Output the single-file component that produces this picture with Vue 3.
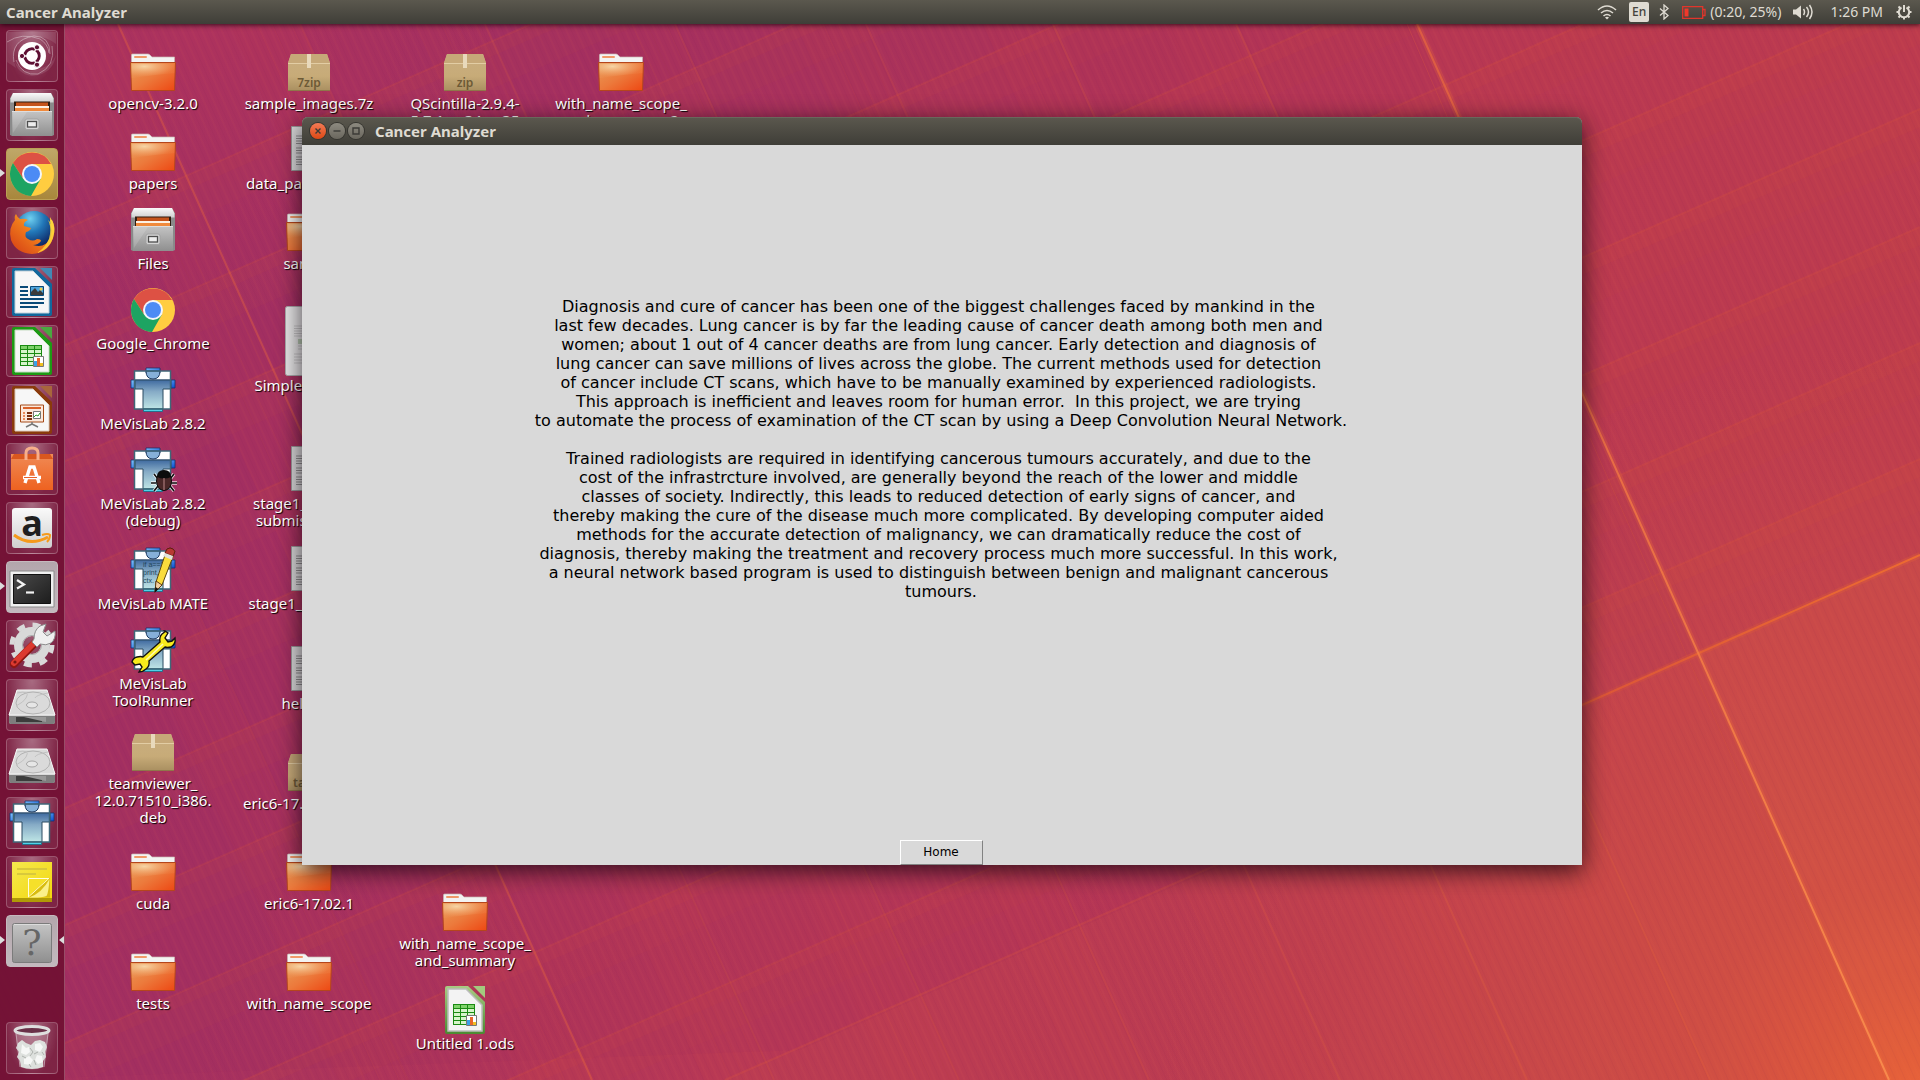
<script setup>
const launcher = [
  { icon: 'dash', label: 'Search your computer' },
  { icon: 'files', label: 'Files', drop: 2 },
  { icon: 'chrome', label: 'Google Chrome', drop: 2, tone: 'gold', running: true },
  { icon: 'firefox', label: 'Firefox' },
  { icon: 'writer', label: 'LibreOffice Writer', drop: 2 },
  { icon: 'calc', label: 'LibreOffice Calc', drop: 2 },
  { icon: 'impress', label: 'LibreOffice Impress', drop: 2 },
  { icon: 'software', label: 'Ubuntu Software' },
  { icon: 'amazon', label: 'Amazon', letter: 'a' },
  { icon: 'terminal', label: 'Terminal', tone: 'silver', running: true },
  { icon: 'settings', label: 'System Settings' },
  { icon: 'drive', label: 'Volume 1' },
  { icon: 'drive', label: 'Volume 2' },
  { icon: 'mevis', label: 'MeVisLab', drop: 2 },
  { icon: 'notes', label: 'Sticky Notes' },
  { icon: 'unknown', label: 'Cancer Analyzer', letter: '?', tone: 'silver', running: true, focused: true },
]

const shortcuts = [
  { x: 153, y: 48, icon: 'folder', lines: ['opencv-3.2.0'] },
  { x: 153, y: 128, icon: 'folder', lines: ['papers'] },
  { x: 153, y: 208, icon: 'files', lines: ['Files'] },
  { x: 153, y: 288, icon: 'chrome', lines: ['Google_Chrome'] },
  { x: 153, y: 368, icon: 'mevis', lines: ['MeVisLab 2.8.2'] },
  { x: 153, y: 448, icon: 'mevis', badge: 'bug', lines: ['MeVisLab 2.8.2', '(debug)'] },
  { x: 153, y: 548, icon: 'mevis', badge: 'pencil', code: ['if a==1', 'print,', 'ctx.'], lines: ['MeVisLab MATE'] },
  { x: 153, y: 628, icon: 'mevis', badge: 'wrench', lines: ['MeVisLab', 'ToolRunner'] },
  { x: 153, y: 728, icon: 'package', lines: ['teamviewer_', '12.0.71510_i386.', 'deb'] },
  { x: 153, y: 848, icon: 'folder', lines: ['cuda'] },
  { x: 153, y: 948, icon: 'folder', lines: ['tests'] },
  { x: 309, y: 48, icon: 'package', tag: '7zip', lines: ['sample_images.7z'] },
  { x: 309, y: 128, icon: 'textfile', lines: ['data_passing.json'] },
  { x: 309, y: 208, icon: 'folder', lines: ['sample'] },
  { x: 309, y: 306, icon: 'preview', tall: true, lines: ['SimpleITK-1.0.0'] },
  { x: 309, y: 448, icon: 'textfile', lines: ['stage1_sample_', 'submission.csv'] },
  { x: 309, y: 548, icon: 'textfile', lines: ['stage1_labels.csv'] },
  { x: 309, y: 648, icon: 'textfile', lines: ['hello.py'] },
  { x: 309, y: 748, icon: 'package', tag: 'tar.gz', lines: ['eric6-17.02.1.tar.gz'] },
  { x: 309, y: 848, icon: 'folder', lines: ['eric6-17.02.1'] },
  { x: 309, y: 948, icon: 'folder', lines: ['with_name_scope'] },
  { x: 465, y: 48, icon: 'package', tag: 'zip', lines: ['QScintilla-2.9.4-', '5.7.1.cp34.cp35'] },
  { x: 465, y: 888, icon: 'folder', lines: ['with_name_scope_', 'and_summary'] },
  { x: 465, y: 988, icon: 'ods', lines: ['Untitled 1.ods'] },
  { x: 621, y: 48, icon: 'folder', lines: ['with_name_scope_', 'and_summary_2'] },
]

const steep = [
  [-66, 0.08], [118, 0.4], [300, 0.14], [485, 0.14], [675, 0.16], [866, 0.16], [1053, 0.2], [1236, 0.24],
]
const shallow = [229, 345, 461, 577, 692, 808, 925, 1043, 1159, 1275]

const paragraphs = [
  [
    'Diagnosis and cure of cancer has been one of the biggest challenges faced by mankind in the',
    'last few decades. Lung cancer is by far the leading cause of cancer death among both men and',
    'women; about 1 out of 4 cancer deaths are from lung cancer. Early detection and diagnosis of',
    'lung cancer can save millions of lives across the globe. The current methods used for detection',
    'of cancer include CT scans, which have to be manually examined by experienced radiologists.',
    'This approach is inefficient and leaves room for human error.  In this project, we are trying',
    'to automate the process of examination of the CT scan by using a Deep Convolution Neural Network.',
  ],
  [
    'Trained radiologists are required in identifying cancerous tumours accurately, and due to the',
    'cost of the infrastrcture involved, are generally beyond the reach of the lower and middle',
    'classes of society. Indirectly, this leads to reduced detection of early signs of cancer, and',
    'thereby making the cure of the disease much more complicated. By developing computer aided',
    'methods for the accurate detection of malignancy, we can dramatically reduce the cost of',
    'diagnosis, thereby making the treatment and recovery process much more successful. In this work,',
    'a neural network based program is used to distinguish between benign and malignant cancerous',
    'tumours.',
  ],
].map((lines) => lines.join(' \n'))
</script>

<template>
  <div class="screen">
    <svg class="wallpaper" viewBox="0 0 1920 1080" preserveAspectRatio="xMidYMid slice" aria-hidden="true">
      <defs>
        <linearGradient id="wpBase" x1="0" y1="0.1" x2="1" y2="0.3">
          <stop offset="0" stop-color="#a12f64" />
          <stop offset="0.3" stop-color="#a6305f" />
          <stop offset="0.65" stop-color="#b63654" />
          <stop offset="1" stop-color="#bd3b4e" />
        </linearGradient>
        <radialGradient id="wpTop" gradientUnits="userSpaceOnUse" cx="200" cy="20" r="300">
          <stop offset="0" stop-color="#b9365a" stop-opacity="0.65" />
          <stop offset="1" stop-color="#b9365a" stop-opacity="0" />
        </radialGradient>
        <radialGradient id="wpLow" gradientUnits="userSpaceOnUse" cx="800" cy="1180" r="620">
          <stop offset="0" stop-color="#be3c52" stop-opacity="0.6" />
          <stop offset="1" stop-color="#b83858" stop-opacity="0" />
        </radialGradient>
        <radialGradient id="wpGlow" gradientUnits="userSpaceOnUse" cx="1920" cy="1100" r="760">
          <stop offset="0" stop-color="#ea6236" stop-opacity="0.95" />
          <stop offset="0.3" stop-color="#d65440" stop-opacity="0.65" />
          <stop offset="0.7" stop-color="#cc4c48" stop-opacity="0.4" />
          <stop offset="1" stop-color="#c84848" stop-opacity="0" />
        </radialGradient>
        <linearGradient id="wpHot" gradientUnits="userSpaceOnUse" x1="1582" y1="0" x2="1920" y2="0">
          <stop offset="0" stop-color="#e8602e" stop-opacity="0.6" />
          <stop offset="1" stop-color="#f2702e" stop-opacity="0.85" />
        </linearGradient>
        <linearGradient id="wpRay" gradientUnits="userSpaceOnUse" x1="0" y1="24" x2="0" y2="1080">
          <stop offset="0" stop-color="#ee6c3c" stop-opacity="0.6" />
          <stop offset="1" stop-color="#f88a4c" />
        </linearGradient>
        <pattern id="wpGrain" width="9" height="9" patternUnits="userSpaceOnUse" patternTransform="rotate(-24)">
          <rect width="2" height="9" fill="#f07a4a" opacity="0.04" />
          <rect x="5" width="1" height="9" fill="#6a1850" opacity="0.05" />
        </pattern>
      </defs>
      <rect width="1920" height="1080" fill="url(#wpBase)" />
      <rect width="1920" height="1080" fill="url(#wpTop)" />
      <rect width="1920" height="1080" fill="url(#wpLow)" />
      <rect width="1920" height="1080" fill="url(#wpGlow)" />
      <g v-for="y in shallow" :key="y" :transform="`translate(65 ${y})`">
        <path d="M0 0 1855-816v52L0 46z" fill="#e8603a" opacity="0.04" />
        <path d="M0 0 1855-816v18L0 14z" fill="#e8603a" opacity="0.06" />
        <path d="M0 0 1855-816" stroke="#e8603a" stroke-width="2" opacity="0.16" />
      </g>
      <g v-for="[x, o] in steep" :key="x" :transform="`translate(${x} 24)`">
        <path d="M0 0 474 1056h-70L-70 0z" fill="#d84a48" opacity="0.07" />
        <path d="M0 0 474 1056" stroke="#ee6a3c" stroke-width="2" :opacity="o" />
        <path d="M-9 0 465 1056M-28 0 446 1056M-43 0 431 1056" stroke="#e8603a" opacity="0.08" />
      </g>
      <path d="M1417 24 1697 650 1582 705 1280 840 800 1050 0 1080V0h1417z" fill="#8d2a68" opacity="0.06" />
      <path d="M1697 652 1920 555v525h-30z" fill="#ee7a40" opacity="0.12" />
      <path d="M1697 652 1887 1080H725L1582 705z" fill="#ee7a40" opacity="0.05" />
      <rect width="1920" height="1080" fill="url(#wpGrain)" />
      <path d="M725 1080 1582 705" stroke="#e8603a" stroke-width="2" opacity="0.2" />
      <path d="M1582 705 1920 555" stroke="url(#wpHot)" stroke-width="6" opacity="0.25" />
      <path d="M1582 705 1920 555" stroke="url(#wpHot)" stroke-width="2" />
      <path d="M1417 24 1889 1080" stroke="#f0703a" stroke-width="6" opacity="0.22" />
      <path d="M1417 24 1889 1080" stroke="url(#wpRay)" stroke-width="2" />
      <path d="M1407 24 1452 128M1590 438 1680 640 1860 1046" fill="none" stroke="#e8603a" opacity="0.25" />
    </svg>

    <svg class="sprites" aria-hidden="true">
      <defs>
        <linearGradient id="gFolder" x1="0" y1="0" x2="1" y2="1">
          <stop offset="0" stop-color="#e99b57" /><stop offset="0.5" stop-color="#ec7a3c" /><stop offset="1" stop-color="#ee4712" />
        </linearGradient>
        <radialGradient id="gShine" cx="0.3" cy="0.2" r="0.7">
          <stop offset="0" stop-color="#f8dcae" stop-opacity="0.9" /><stop offset="1" stop-color="#f3b57c" stop-opacity="0.1" />
        </radialGradient>
        <linearGradient id="gPack" x1="0" y1="0" x2="0" y2="1">
          <stop offset="0" stop-color="#c9ae80" /><stop offset="0.6" stop-color="#c7ab78" /><stop offset="1" stop-color="#a98f60" />
        </linearGradient>
        <linearGradient id="gGrey" x1="0" y1="0" x2="0" y2="1">
          <stop offset="0" stop-color="#c4c4c4" /><stop offset="1" stop-color="#8f8f8f" />
        </linearGradient>
        <linearGradient id="gLight" x1="0" y1="0" x2="0" y2="1">
          <stop offset="0" stop-color="#fafafa" /><stop offset="1" stop-color="#cfcfcf" />
        </linearGradient>
        <linearGradient id="gShirt" x1="0" y1="0" x2="0" y2="1">
          <stop offset="0" stop-color="#3f6aa0" /><stop offset="0.4" stop-color="#86abc6" /><stop offset="1" stop-color="#bfe6e6" />
        </linearGradient>
        <linearGradient id="gBlue" x1="0" y1="0" x2="1" y2="1">
          <stop offset="0" stop-color="#7fc4ff" /><stop offset="1" stop-color="#0b4fd0" />
        </linearGradient>
        <linearGradient id="gDark" x1="0" y1="0" x2="1" y2="1">
          <stop offset="0" stop-color="#4a4a4a" /><stop offset="1" stop-color="#1d1d1d" />
        </linearGradient>
        <linearGradient id="gOds" x1="0" y1="0" x2="0" y2="1">
          <stop offset="0" stop-color="#aacb84" /><stop offset="1" stop-color="#4b8a32" />
        </linearGradient>
        <radialGradient id="gGlobe" cx="0.4" cy="0.2" r="0.8">
          <stop offset="0" stop-color="#6fd0f0" /><stop offset="0.45" stop-color="#2277b8" /><stop offset="1" stop-color="#0b1f5c" />
        </radialGradient>
        <linearGradient id="gFox" x1="0" y1="1" x2="1" y2="0">
          <stop offset="0" stop-color="#d33a14" /><stop offset="0.5" stop-color="#ef7a1c" /><stop offset="1" stop-color="#ffe14a" />
        </linearGradient>
        <linearGradient id="gBag" x1="0" y1="0" x2="0" y2="1">
          <stop offset="0" stop-color="#f08a55" /><stop offset="1" stop-color="#ee6220" />
        </linearGradient>
        <linearGradient id="gNote" x1="0" y1="0" x2="1" y2="1">
          <stop offset="0" stop-color="#f5e84e" /><stop offset="1" stop-color="#f3d90e" />
        </linearGradient>
      </defs>

      <symbol id="i-folder" viewBox="0 0 48 48">
        <path d="M2.500 16V7q0-1 1-1H19q1 0 2 1l2 2h22.500v8z" fill="#f4f4f2" stroke="#c9b9b4" stroke-width=".7" />
        <rect x="5" y="8" width="13" height="2" rx="1" fill="#f09a68" />
        <path d="M1.500 14.500h45L45.500 42.500h-43z" fill="url(#gFolder)" stroke="#b5461c" />
        <path d="M2.500 15.500h43V25Q24 27 2.500 30z" fill="url(#gShine)" />
      </symbol>

      <symbol id="i-package" viewBox="0 0 48 48">
        <path d="M6 6h36l3 9v28H3V15z" fill="url(#gPack)" />
        <path d="M6 6h36l3 9H3z" fill="#c6a878" />
        <path d="M3 15.500h42" stroke="#e2cda4" />
        <path d="M22 6h4v14h-4z" fill="#e8d9bb" />
        <path d="M3 42.500h42" stroke="#8f774a" />
      </symbol>

      <symbol id="i-files" viewBox="0 0 48 48">
        <path d="M5 0h38l3 5v37l-2 1H4l-2-1V5z" fill="#8a8a8a" />
        <path d="M5 0h38l2.500 5.500v4h-43v-4z" fill="url(#gLight)" />
        <path d="M6 8.500h36V20H6z" fill="#2e1c10" />
        <path d="M8 9.500h32V17H8z" fill="#c4531b" />
        <path d="M7 13h34v2H7z" fill="#fdf1e4" />
        <path d="M7 15h34v4H7z" fill="#f08a3c" />
        <path d="M4 18h40v25H4z" fill="url(#gGrey)" />
        <path d="M4 18.500h40" stroke="#dedede" />
        <path d="M5 19h14L5 40z" fill="#fff" opacity=".14" />
        <rect x="17" y="26" width="14" height="10.500" rx="2" fill="#d5d5d5" stroke="#a2a2a2" />
        <rect x="19.500" y="28.500" width="9" height="5.500" fill="#ededed" stroke="#4e4e4e" stroke-width="1.300" />
      </symbol>

      <symbol id="i-chrome" viewBox="0 0 48 48">
        <circle cx="24" cy="22" r="22" fill="#ffcd40" />
        <path d="M4.950 11A22 22 0 0 1 43.050 12H24L15.340 27z" fill="#dd5144" />
        <path d="M4.950 11A22 22 0 0 0 23 44L32.660 27 24 30l-8.660-3z" fill="#1da462" />
        <circle cx="24" cy="22" r="10" fill="#f4f6fa" />
        <circle cx="24" cy="22" r="8" fill="#4c8bf5" />
      </symbol>

      <symbol id="i-mevis" viewBox="0 0 48 48">
        <path d="M5.500 3h36v38h-36z" fill="#fff" />
        <path d="M17 0h14v5H17z" fill="url(#gBlue)" stroke="#1c2f66" stroke-width=".8" />
        <path d="M2 12h44v8H2z" fill="url(#gBlue)" stroke="#12306e" stroke-width=".8" />
        <path d="M6 12h36v9h-8v20H14V21H6z" fill="url(#gShirt)" stroke="#2b4a60" />
        <path d="M17 3h14q0 8-7 8t-7-8z" fill="#86b0d8" stroke="#1f3c62" />
        <path d="M14.500 41h19v2.500h-19z" fill="#4fd3e8" stroke="#136a86" stroke-width=".8" />
        <path d="M5.500 3h36v38h-36z" fill="none" stroke="#3f6778" stroke-width="1.500" />
      </symbol>

      <symbol id="i-bug" viewBox="0 0 48 48">
        <g stroke="#fff" stroke-width="3.400" fill="none" opacity=".8"><path d="M29 31l-4-5M27 35h-5M29 38l-4 5M41 31l4-5M42 35h6M41 38l4 5" /></g>
        <g stroke="#111" stroke-width="1.600" fill="none"><path d="M29 31l-4-5M27 35h-5M29 38l-4 5M41 31l4-5M42 35h6M41 38l4 5" /></g>
        <ellipse cx="35" cy="33" rx="7.500" ry="9.500" fill="#4a2828" stroke="#0a0a0a" />
        <path d="M28 29q0-7 7-7t7 7q-7 3-14 0z" fill="#0c0c0c" />
        <path d="M35 30v12" stroke="#b88" />
      </symbol>

      <symbol id="i-pencil" viewBox="0 0 48 48">
        <path d="M38 1q3-2 6 0 3 2 1 5L33 37l-7 7 1-10z" fill="#f9dc3c" stroke="#5d4a10" />
        <path d="M38 1q3-2 6 0 3 2 1 5l-1 2-8-3z" fill="#b83a32" stroke="#641a14" />
        <path d="M36 5l8 3-1 4-9-4z" fill="#e2e2dc" />
        <path d="M27 33l6 4-7 7z" fill="#f2cfa0" stroke="#5d3a10" /><path d="M26.500 39l3 2-4 4z" fill="#111" />
      </symbol>

      <symbol id="i-wrench" viewBox="0 0 48 48">
        <path d="M33 6q4-3 3-3l3 2-3 5 3 4 4-1 3-3q1 6-4 9-4 1-6 0L20 33q1 5-3 8-3 3-7 3l3-5-2-3-5 1-3-3q1-4 5-5 4-1 6 0L31 14q-1-5 2-8z" fill="#f7ea1c" stroke="#111" stroke-width="1.400" />
        <path d="M17 32 34 16" stroke="#fffbb0" stroke-width="1.500" />
      </symbol>

      <symbol id="i-textfile" viewBox="0 0 48 48">
        <path d="M6.500-1.500h35v44h-35z" fill="#dcdcdc" stroke="#999" />
        <path d="M11 8h26M11 10.500h26M11 13h26M11 15.500h24M11 20h26M11 22.500h26M11 25h20M11 29h26M11 31.500h26M11 34h26M11 36.500h16" stroke="#8f8f8f" />
      </symbol>

      <symbol id="i-preview" viewBox="0 0 48 72">
        <rect x=".5" y=".5" width="47" height="69" rx="2" fill="#e6e6e6" stroke="#aaa" />
        <path d="M9 20h30M9 22.500h30M9 25h28M9 27.500h30M9 30h30M13 40h24M13 43h24M9 48h30M9 51h30M9 54h30M9 57h20" stroke="#c4c4c4" />
        <path d="M13 33h20v5H13z" fill="#b6c9b0" />
      </symbol>

      <symbol id="i-sheet" viewBox="0 0 22 21">
        <path d="M0 0h22v21H0z" fill="#1a8a12" />
        <path d="M1 1h6v3H1zM8 1h6v3H8zM15 1h6v3h-6z" fill="#7fd26b" />
        <path d="M1 5h6v3H1zM8 5h6v3H8zM15 5h6v3h-6zM1 9h6v3H1zM8 9h6v3H8zM15 9h6v3h-6zM1 13h6v3H1zM8 13h6v3H8zM15 13h6v3h-6zM1 17h6v3H1zM8 17h6v3H8z" fill="#d6f5ca" />
      </symbol>

      <symbol id="i-ods" viewBox="0 0 48 48">
        <path d="M6-2h21l17 16v30q0 2-2 2H6q-2 0-2-2V0q0-2 2-2z" fill="url(#gOds)" />
        <path d="M32-2h12v12z" fill="#a3c97e" />
        <path d="M7 1h18l16 16v26H7z" fill="#f3f3f3" />
        <path d="M7 1h18l16 16v26H7z" fill="none" stroke="#bcbcbc" stroke-width="1.500" />
        <use href="#i-sheet" x="12" y="16" width="22" height="21" />
        <path d="M25.500 27.500h10v10h-10z" fill="#fff" stroke="#777" />
        <path d="M26 32h3v5h-3z" fill="#3aa0e8" /><path d="M29 29h3v8h-3z" fill="#e8662a" /><path d="M32 34h3v3h-3z" fill="#f0c020" />
      </symbol>

      <symbol id="i-calc" viewBox="0 0 48 48">
        <path d="M6-2h21l17 16v30q0 2-2 2H6q-2 0-2-2V0q0-2 2-2z" fill="#1d9a14" />
        <path d="M32-2h12v12z" fill="#4aa840" />
        <path d="M7 1h18l16 16v26H7z" fill="#f7f7f7" stroke="#c6dcc2" />
        <use href="#i-sheet" x="12" y="16" width="22" height="21" />
        <path d="M25.500 27.500h10v10h-10z" fill="#fff" stroke="#777" />
        <path d="M26 32h3v5h-3z" fill="#3aa0e8" /><path d="M29 29h3v8h-3z" fill="#e8662a" /><path d="M32 34h3v3h-3z" fill="#f0c020" />
      </symbol>

      <symbol id="i-writer" viewBox="0 0 48 48">
        <path d="M6-2h21l17 16v30q0 2-2 2H6q-2 0-2-2V0q0-2 2-2z" fill="#11689c" />
        <path d="M32-2h12v12z" fill="#4389b4" />
        <path d="M7 1h18l16 16v26H7z" fill="#f7f7f7" stroke="#c0d0da" />
        <path d="M12 17h8M12 21h8M12 25h8M12 29h24M12 33h24M12 37h18" stroke="#0a4a78" stroke-width="2" />
        <path d="M22.500 16.500h13v9h-13z" fill="#4ea5dc" stroke="#0a4a78" />
        <path d="M23 25v-3l4-4 3 4 2-2 3 3v2z" fill="#3b3b3b" /><circle cx="33" cy="19" r="1.500" fill="#f5d24a" />
      </symbol>

      <symbol id="i-impress" viewBox="0 0 48 48">
        <path d="M6-2h21l17 16v30q0 2-2 2H6q-2 0-2-2V0q0-2 2-2z" fill="#8a3a0c" />
        <path d="M32-2h12v12z" fill="#a8663c" />
        <path d="M7 1h18l16 16v26H7z" fill="#f7f7f7" stroke="#dccabb" />
        <path d="M12.500 17h23v17h-23z" fill="#fbe9dd" stroke="#a54a18" />
        <path d="M15 20h18" stroke="#d9622a" stroke-width="2" />
        <path d="M15 25h2M15 28h2M15 31h2" stroke="#e88a5a" stroke-width="2" /><path d="M19 25h5M19 28h5M19 31h5" stroke="#7a3010" stroke-width="2" />
        <path d="M25.500 23.500h7v7h-7z" fill="#fff" stroke="#777" /><path d="M26 29l2-2 2 1 2-3" stroke="#2a9a2a" fill="none" />
        <path d="M24 34v3M24 36l-6 3M24 36l6 3" stroke="#777" stroke-width="1.500" fill="none" />
      </symbol>

      <symbol id="i-dash" viewBox="0 0 48 48">
        <g fill="none" stroke="#fff" stroke-width="1" opacity=".35">
          <path d="M6 30Q2 8 26 4q16 0 16 18" /><path d="M44 14q4 20-14 28-16 2-22-14" /><path d="M-1 10Q14 0 32 7q8 5 9 14" />
        </g>
        <path d="M0 0h48v12Q30-2 12 10 2 20 8 36L-1 30V0z" fill="#fff" opacity=".1" /><path d="M48 22q-2 20-24 22-14-2-17-14 8 12 20 8 18-4 21-16z" fill="#fff" opacity=".1" />
        <circle cx="24" cy="24" r="14" fill="#fff" />
        <circle cx="24" cy="24" r="7.200" fill="none" stroke="#5d0f33" stroke-width="3" />
        <path d="M24 24h-10M24 24l5-9M24 24l5 9" stroke="#fff" stroke-width="1.300" />
        <circle cx="24" cy="24" r="5.500" fill="#fff" />
        <g fill="#5d0f33" stroke="#fff"><circle cx="14" cy="24" r="2.600" /><circle cx="29" cy="15.300" r="2.600" /><circle cx="29" cy="32.700" r="2.600" /></g>
      </symbol>

      <symbol id="i-firefox" viewBox="0 0 48 48">
        <circle cx="26" cy="21" r="19" fill="url(#gGlobe)" />
        <path d="M44 11q4 8 1 18-5 15-21 16Q8 44 3 31 0 19 7 11q-1-4 1-6 1 3 4 5 5-1 8 1-5 2-4 6l7 2q-1 3-5 4-2 5 2 7 5 3 9 0 4 0 4 2-3 4-8 4 12 4 17-7 3-9-1-16l1 3q2-1 0-5z" fill="url(#gFox)" />
        <path d="M42 8q7 9 3 21-4 12-16 15 12-8 13-19 1-9-2-14l2 2z" fill="#ffd83a" opacity=".8" />
      </symbol>

      <symbol id="i-software" viewBox="0 0 48 48">
        <path d="M3 9h42v36H3z" fill="url(#gBag)" />
        <path d="M3 14l3-5h36l3 5z" fill="#d9571f" />
        <path d="M18 15V8q0-5 6-5t6 5v7" fill="none" stroke="#f7ae8a" stroke-width="3" />
        <path d="M17 38l5-16h4l5 16" fill="none" stroke="#fff" stroke-width="3.400" /><path d="M15 32.500h18" stroke="#fff" stroke-width="3.500" /><path d="M16 32.500h13" stroke="#e8622a" stroke-width="1" />
      </symbol>

      <symbol id="i-amazon" viewBox="0 0 48 48">
        <rect x="4" y="4" width="40" height="40" rx="3" fill="url(#gLight)" />
        <path d="M6 31q16 12 34 2" fill="none" stroke="#f59a1c" stroke-width="3" /><path d="M34 31q6-2 8 0 0 4-3 7" fill="none" stroke="#f59a1c" stroke-width="2" />
      </symbol>

      <symbol id="i-terminal" viewBox="0 0 48 48">
        <path d="M2 8h44v36H2z" fill="#f0f0f0" stroke="#8a8a8a" />
        <path d="M5.500 11.500h37v29h-37z" fill="url(#gDark)" stroke="#111" />
        <path d="M9 17l7 4.500-7 4" fill="none" stroke="#f2f2f2" stroke-width="2.200" /><path d="M18 29.500h8" stroke="#f2f2f2" stroke-width="2.200" />
      </symbol>

      <symbol id="i-settings" viewBox="0 0 48 48">
        <circle cx="24" cy="23" r="13.500" fill="none" stroke="#d9d9d9" stroke-width="9" />
        <circle cx="24" cy="23" r="20" fill="none" stroke="#d9d9d9" stroke-width="5" stroke-dasharray="7.850 7.850" />
        <circle cx="24" cy="23" r="9.500" fill="none" stroke="#aaa" />
        <path d="M6 42 28 20" stroke="#8e1713" stroke-width="8" stroke-linecap="round" /><path d="M6 41 28 19" stroke="#dc3a30" stroke-width="6" stroke-linecap="round" />
        <path d="M26 17q0-9 6-13l6-2-3 8 4 4 8-5q1 8-4 12-5 3-11 1l-3 3-5-5z" fill="#efefef" stroke="#8e8e8e" />
        <circle cx="7" cy="40" r="1.600" fill="#7a1512" />
      </symbol>

      <symbol id="i-drive" viewBox="0 0 48 48">
        <path d="M9 9h30l8 25v6q0 3-2 3H3q-2 0-2-3v-6z" fill="#bcbcbc" />
        <path d="M9 9h30l8 25H1z" fill="#dadada" stroke="#f5f5f5" />
        <path d="M1 35h46v5q0 3-2 3H3q-2 0-2-3z" fill="#7e7e7e" /><path d="M8 36h26v5H8z" fill="#3c3c3c" /><path d="M16 36h22v5z" fill="#999" />
        <ellipse cx="25" cy="22" rx="17" ry="11" fill="none" stroke="#b2b2b2" /><ellipse cx="24" cy="24" rx="5.500" ry="3" fill="#e6e6e6" stroke="#a6a6a6" />
        <path d="M9 12q14-3 9 5-2 4-10 8M40 12q-12 2-13 5" fill="none" stroke="#c2c2c2" />
      </symbol>

      <symbol id="i-notes" viewBox="0 0 48 48">
        <path d="M4 5h40v39H4z" fill="#b09a06" /><path d="M4 4h40v36H4z" fill="url(#gNote)" />
        <path d="M9 11h30M9 16h19" stroke="#d8c93c" stroke-width="2" />
        <path d="M20.500 39V20.500H41z" fill="#f5e02a" stroke="#fffce0" /><path d="M20.500 39.500 42 20v19.500z" fill="#d8bc12" /><path d="M21 39.500Q34 35 41.500 21q-1 14-3 17-6 2-17.500 1.500z" fill="#faf08a" />
      </symbol>

      <symbol id="i-unknown" viewBox="0 0 48 48">
        <rect x="4.500" y="6.500" width="39" height="39" rx="2" fill="url(#gGrey)" stroke="#7b7b7b" />
        <path d="M6 7.500h36" stroke="#dcdcdc" />
      </symbol>

      <symbol id="i-trash" viewBox="0 0 48 48">
        <path d="M7 7h34l-5 36q-12 5-24 0z" fill="#fff" opacity=".2" />
        <path d="M10 19l4-3 4 3 5 2 4-4 5-1 5 2 2 5-2 5 1 5-3 4v6q-11 4-22 0l-1-6-3-4 2-5-3-4z" fill="#dde0dd" />
        <path d="M14 20l4 4 3-1 1 5-4 3-5-2zM27 20l5-1 3 4-3 5-5-2zM16 35l5-3 4 4-3 5-6-1zM29 31l5 1 1 6-5 2-3-4z" fill="#f6f7f6" />
        <path d="M22 24l3 4-3 4M30 28l-4 2M14 32l4 2M26 36l2 5M21 40l2 3M34 28l2 3" stroke="#aeb2ae" fill="none" />
        <ellipse cx="24" cy="6.500" rx="17" ry="4" fill="#6a3048" stroke="#dedede" stroke-width="3" />
        <path d="M8 9l4 34M40 9l-4 34" stroke="#d8c8d0" opacity=".6" />
      </symbol>
    </svg>

    <header class="panel">
      <h1 class="panel-title">Cancer Analyzer</h1>
      <div class="indicators">
        <svg class="wifi" viewBox="0 0 20 16" width="20" height="16" fill="none" stroke="#dfdbd2" stroke-width="1.600" aria-label="Network">
          <path d="M1 6Q10-2 19 6M4 9q6-5 12 0M6.500 12q3.500-3 7 0" /><path d="M8 13.500q2-1.500 4 0l-2 2z" fill="#dfdbd2" stroke="none" />
        </svg>
        <span class="keyboard">En</span>
        <svg class="bluetooth" viewBox="0 0 10 16" width="10" height="16" fill="none" stroke="#dfdbd2" stroke-width="1.300" aria-label="Bluetooth"><path d="M1 4.500l8 7L5 15V1l4 3.500-8 7" /></svg>
        <svg class="battery" viewBox="0 0 24 13" width="24" height="13" aria-label="Battery">
          <path d="M.7.700h20v11.600H.7zM21 3.500h2v6h-2" fill="none" stroke="#e2352b" stroke-width="1.300" /><path d="M2.500 2.500h4v8h-4z" fill="#f0392b" />
        </svg>
        <span class="charge">(0:20, 25%)</span>
        <svg class="volume" viewBox="0 0 20 16" width="20" height="16" aria-label="Sound">
          <path d="M0 5.500h3l5-4v13l-5-4H0z" fill="#dfdbd2" /><path d="M10.500 5q2 3 0 6M13.500 3q4 5 0 10M16.500 1q5 7 0 14" fill="none" stroke="#dfdbd2" stroke-width="1.500" />
        </svg>
        <time class="clock">1:26 PM</time>
        <svg class="gear" viewBox="0 0 16 16" width="16" height="16" fill="none" stroke="#dfdbd2" aria-label="Session">
          <path d="M5.500 3.500a5.200 5.200 0 1 0 5 0" stroke-width="2" /><path d="M8 1v7" stroke-width="2" />
          <path d="M4 4 2.500 2.500M12 4l1.500-1.500M3 8H.5M13 8h2.500M4 12l-1.500 1.500M12 12l1.500 1.500M8 13v2.500" stroke-width="2" />
        </svg>
      </div>
    </header>

    <nav class="launcher" aria-label="Launcher">
      <button
        v-for="(app, i) in launcher"
        :key="i"
        type="button"
        class="tile"
        :class="[app.tone, app.icon, { running: app.running, focused: app.focused }]"
        :aria-label="app.label"
      >
        <svg width="48" height="48">
          <use :href="`#i-${app.icon}`" :y="app.drop || 0" width="48" height="48" />
          <text v-if="app.letter" class="letter" x="24" y="32" text-anchor="middle">{{ app.letter }}</text>
        </svg>
      </button>
      <button type="button" class="tile trash" aria-label="Trash">
        <svg width="48" height="48"><use href="#i-trash" width="48" height="48" /></svg>
      </button>
    </nav>

    <figure
      v-for="item in shortcuts"
      :key="item.x + '-' + item.y"
      class="shortcut"
      :style="{ left: item.x + 'px', top: item.y + 'px' }"
    >
      <svg class="glyph" width="48" :height="item.tall ? 71 : 47">
        <use :href="`#i-${item.icon}`" width="48" :height="item.tall ? 72 : 48" />
        <text v-for="(row, i) in item.code" :key="row" class="code" x="14" :y="19 + i * 8">{{ row }}</text>
        <use v-if="item.badge" :href="`#i-${item.badge}`" width="48" height="48" />
        <text v-if="item.tag" class="tag" x="24" y="39" text-anchor="middle">{{ item.tag }}</text>
      </svg>
      <figcaption>
        <span v-for="line in item.lines" :key="line">{{ line }}</span>
      </figcaption>
    </figure>

    <section class="window" aria-label="Cancer Analyzer">
      <header class="titlebar">
        <button type="button" class="control close" aria-label="Close">
          <svg viewBox="0 0 16 16" width="16" height="16"><path d="M5.500 5.500l5 5M10.500 5.500l-5 5" /></svg>
        </button>
        <button type="button" class="control" aria-label="Minimize">
          <svg viewBox="0 0 16 16" width="16" height="16"><path d="M4.500 8h7" /></svg>
        </button>
        <button type="button" class="control" aria-label="Maximize">
          <svg viewBox="0 0 16 16" width="16" height="16"><path d="M5 5h6v6H5z" /></svg>
        </button>
        <h2 class="window-title">Cancer Analyzer</h2>
      </header>
      <main class="content">
        <p v-for="(text, i) in paragraphs" :key="i">{{ text }}</p>
        <button type="button" class="home">Home</button>
      </main>
    </section>
  </div>
</template>

<style>
body {
  margin: 0;
}
</style>

<style scoped>
.screen {
  position: relative;
  display: flex;
  flex-direction: column;
  min-height: 100vh;
  overflow: hidden;
  background: #a6305f;
  font-family: "Noto Sans", "Open Sans", sans-serif;
}

.wallpaper {
  position: absolute;
  inset: 0;
  width: 100%;
  height: 100%;
}

.sprites {
  position: absolute;
  width: 0;
  height: 0;
}

.sprites symbol,
.glyph,
.tile svg {
  overflow: visible;
}

.panel {
  position: relative;
  z-index: 2;
  display: flex;
  justify-content: space-between;
  align-items: center;
  height: 24px;
  padding: 0 8px 0 6px;
  background: linear-gradient(#5b584e, #3f3e38);
  box-shadow: 0 1px 5px rgba(20, 0, 10, 0.8);
  color: #dfdbd2;
}

.panel-title,
.window-title {
  margin: 0;
  font-size: 15px;
  line-height: 20px;
  font-weight: 700;
  color: #dfdbd2;
}

.indicators {
  display: flex;
  align-items: center;
  font-size: 14px;
  line-height: 20px;
}

.keyboard {
  width: 20px;
  margin-left: 12px;
  border-radius: 2px;
  background: #dfdbd2;
  color: #45433c;
  font-size: 12px;
  font-weight: 500;
  text-align: center;
}

.bluetooth {
  margin-left: 10px;
}

.battery {
  margin-left: 13px;
}

.charge {
  margin-left: 4px;
}

.volume {
  margin-left: 12px;
}

.clock {
  margin-left: 17px;
}

.gear {
  margin-left: 13px;
}

.launcher {
  position: relative;
  display: flex;
  flex: 1;
  flex-direction: column;
  gap: 7px;
  box-sizing: border-box;
  width: 65px;
  padding: 6px;
  border-right: 1px solid rgba(255, 255, 255, 0.25);
  background: rgba(108, 14, 46, 0.86);
}

.tile {
  position: relative;
  box-sizing: border-box;
  width: 52px;
  height: 52px;
  padding: 1px;
  border: 1px solid rgba(255, 255, 255, 0.22);
  border-radius: 4px;
  background: radial-gradient(ellipse at 50% 0, rgba(255, 255, 255, 0.38), rgba(255, 255, 255, 0.08) 75%);
}

.tile svg {
  display: block;
}

.tile.gold {
  border-color: #bba055;
  background: linear-gradient(#bfa768, #a8873c);
}

.tile.silver {
  border-color: #c5b9be;
  background: linear-gradient(#b3a6ac, #c3b9be);
}

.tile.trash {
  margin-top: auto;
}

.letter {
  fill: #1f1f1f;
  font-family: "Open Sans", sans-serif;
  font-size: 36px;
  font-weight: 700;
}

.unknown .letter {
  fill: #666;
  font-family: "DejaVu Serif", serif;
  font-weight: 400;
  transform: translateY(6px);
}

.tile.running::before,
.tile.focused::after {
  content: "";
  position: absolute;
  top: 20px;
  left: -7px;
  border: solid transparent;
  border-width: 4px 0 4px 5px;
  border-left-color: #dcdcdc;
}

.tile.focused::after {
  right: -7px;
  left: auto;
  border-width: 4px 5px 4px 0;
  border-right-color: #dcdcdc;
}

.shortcut {
  position: absolute;
  display: flex;
  flex-direction: column;
  align-items: center;
  width: 150px;
  margin: 0 0 0 -75px;
}

.glyph {
  display: block;
}

.tag {
  fill: #6d5a36;
  font-size: 12px;
  font-weight: 600;
}

.code {
  fill: #22455a;
  font-family: "Liberation Sans", sans-serif;
  font-size: 7px;
}

figcaption {
  display: flex;
  flex-direction: column;
  align-items: center;
  color: #fff;
  font-size: 15px;
  line-height: 17px;
  text-shadow: 1px 1px 1px #000;
  white-space: nowrap;
}

.window {
  position: absolute;
  top: 117px;
  right: 338px;
  bottom: 215px;
  left: 302px;
  display: flex;
  flex-direction: column;
  border-radius: 6px 6px 0 0;
  background: #d9d9d9;
  box-shadow: 0 6px 24px rgba(10, 0, 10, 0.75);
}

.titlebar {
  display: flex;
  align-items: center;
  gap: 3px;
  box-sizing: border-box;
  height: 28px;
  padding: 0 8px;
  border-radius: 6px 6px 0 0;
  background: linear-gradient(#5b584e, #3f3e38);
  box-shadow: inset 0 1px #6a675c;
}

.window-title {
  margin-left: 8px;
}

.control {
  width: 16px;
  height: 16px;
  padding: 0;
  border: 0;
  border-radius: 50%;
  background: linear-gradient(#8d8a80, #6a675e);
  box-shadow: 0 0 0 1px #35342f;
}

.control.close {
  background: linear-gradient(#f37a55, #dd4814);
}

.control svg {
  display: block;
  fill: none;
  stroke: #3c3b37;
  stroke-width: 1.400;
}

.content {
  display: flex;
  flex: 1;
  flex-direction: column;
  align-items: center;
  gap: 19px;
  padding: 152px 2px 0 0;
  color: #000;
  font-family: "DejaVu Sans", sans-serif;
  font-size: 16px;
  line-height: 19px;
}

.content p {
  margin: 0;
  text-align: center;
  white-space: pre;
}

.home {
  box-sizing: border-box;
  width: 83px;
  height: 25px;
  margin-top: auto;
  padding: 0;
  border: 1px solid;
  border-color: #fff #828282 #828282 #fff;
  background: #d9d9d9;
  color: #000;
  font-family: "DejaVu Sans", sans-serif;
  font-size: 12px;
  line-height: 15px;
}
</style>
